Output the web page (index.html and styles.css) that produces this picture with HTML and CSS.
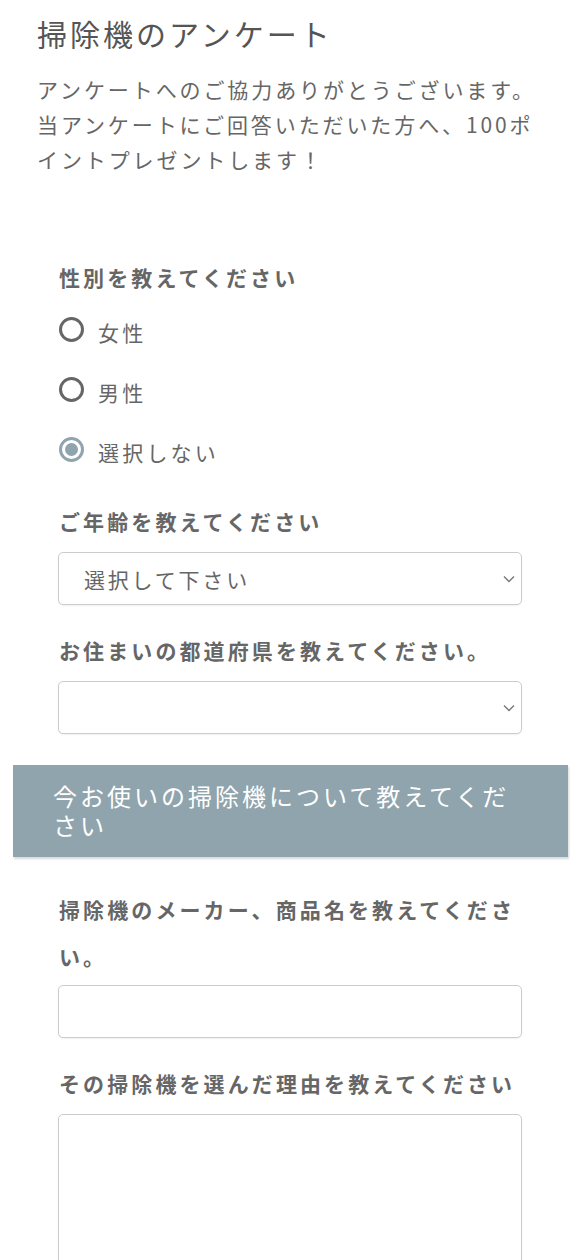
FILE: index.html
```html
<!DOCTYPE html>
<html lang="ja">
<head>
<meta charset="utf-8">
<title>掃除機のアンケート</title>
<link rel="stylesheet" href="styles.css">
</head>
<body>
<div class="page">
  <header class="intro">
    <h1 class="title">掃除機のアンケート</h1>
    <p class="lead">アンケートへのご協力ありがとうございます。当アンケートにご回答いただいた方へ、100ポイントプレゼントします！</p>
  </header>

  <form class="survey">
    <section class="group first">
      <div class="label">性別を教えてください</div>
      <div class="radios">
        <label class="radio"><input type="radio" name="sex" class="radio-input"><span class="radio-text">女性</span></label>
        <label class="radio"><input type="radio" name="sex" class="radio-input"><span class="radio-text">男性</span></label>
        <label class="radio"><input type="radio" name="sex" class="radio-input" checked><span class="radio-text">選択しない</span></label>
      </div>
    </section>

    <section class="group">
      <div class="label">ご年齢を教えてください</div>
      <div class="select-wrap">
        <select class="select">
          <option>選択して下さい</option>
        </select>
        <svg class="chevron" width="12" height="8" viewBox="0 0 12 8"><path d="M1 1.5 L6 6.5 L11 1.5" fill="none" stroke="#777" stroke-width="1.4"/></svg>
      </div>
    </section>

    <section class="group">
      <div class="label">お住まいの都道府県を教えてください。</div>
      <div class="select-wrap">
        <select class="select">
          <option></option>
        </select>
        <svg class="chevron" width="12" height="8" viewBox="0 0 12 8"><path d="M1 1.5 L6 6.5 L11 1.5" fill="none" stroke="#777" stroke-width="1.4"/></svg>
      </div>
    </section>
  </form>

  <div class="banner">今お使いの掃除機について教えてください</div>

  <form class="survey">
    <section class="group after-banner">
      <div class="label">掃除機のメーカー、商品名を教えてください。</div>
      <input type="text" class="text-input">
    </section>
    <section class="group">
      <div class="label">その掃除機を選んだ理由を教えてください</div>
      <textarea class="textarea"></textarea>
    </section>
  </form>
</div>
</body>
</html>
```

FILE: styles.css
```css
* { box-sizing: border-box; }

html, body {
  margin: 0;
  padding: 0;
  background: #fff;
}

body {
  font-family: "Noto Sans CJK JP", "Noto Sans", sans-serif;
  color: #666;
}

.page {
  width: 578px;
}

.intro {
  padding: 13px 30px 0 37px;
}

.title {
  margin: 0;
  font-size: 30px;
  line-height: 40px;
  font-weight: 400;
  letter-spacing: 3px;
  color: #555;
}

.lead {
  margin: 19px 0 0;
  font-size: 21px;
  line-height: 35px;
  letter-spacing: 2.9px;
  color: #666;
}

.survey {
  padding: 0 56px 0 58px;
  margin: 0;
}

.group {
  margin-top: 22px;
}

.group.first {
  margin-top: 77px;
}

.group.after-banner {
  margin-top: 29px;
}

.label {
  padding-left: 1px;
  font-size: 21px;
  line-height: 47px;
  font-weight: 700;
  letter-spacing: 3.1px;
  color: #666;
}

.radios {
  display: flex;
  flex-direction: column;
  gap: 20px;
  margin-top: 11px;
  padding-bottom: 4px;
}

.radio {
  display: flex;
  align-items: center;
  gap: 14px;
  height: 40px;
  padding-left: 1px;
}

.radio-input {
  appearance: none;
  -webkit-appearance: none;
  margin: 0;
  width: 25px;
  height: 25px;
  border: 3px solid #666;
  border-radius: 50%;
  position: relative;
  top: -3px;
  flex: none;
}

.radio-input:checked {
  border-color: #90a4ae;
}

.radio-input:checked::after {
  content: "";
  position: absolute;
  left: 3px;
  top: 3px;
  width: 13px;
  height: 13px;
  border-radius: 50%;
  background: #90a4ae;
}

.radio-text {
  font-size: 21px;
  letter-spacing: 3.2px;
  color: #666;
}

.select-wrap {
  position: relative;
  margin-top: 7px;
}

.select {
  appearance: none;
  -webkit-appearance: none;
  display: block;
  width: 100%;
  height: 53px;
  padding: 0 40px 0 25px;
  border: 1px solid #ccc;
  border-radius: 5px;
  background: #fff;
  box-shadow: 0 1px 2px rgba(0,0,0,0.06);
  font-family: inherit;
  font-size: 21px;
  letter-spacing: 2.8px;
  color: #666;
}

.chevron {
  position: absolute;
  right: 7px;
  top: 23px;
}

.banner {
  margin: 31px 10px 0 13px;
  padding: 16px 45px 18px 40px;
  background: #90a4ae;
  color: #fff;
  font-size: 24px;
  line-height: 29px;
  letter-spacing: 3px;
  box-shadow: 1px 2px 2px rgba(0,0,0,0.15);
}

.text-input {
  display: block;
  width: 100%;
  height: 53px;
  margin-top: 5px;
  border: 1px solid #ccc;
  border-radius: 5px;
  box-shadow: 0 1px 2px rgba(0,0,0,0.06);
  font-family: inherit;
  font-size: 21px;
}

.textarea {
  display: block;
  width: 100%;
  height: 200px;
  margin-top: 7px;
  border: 1px solid #ccc;
  border-radius: 5px;
  box-shadow: 0 1px 2px rgba(0,0,0,0.06);
  font-family: inherit;
  font-size: 21px;
  resize: vertical;
}
```
